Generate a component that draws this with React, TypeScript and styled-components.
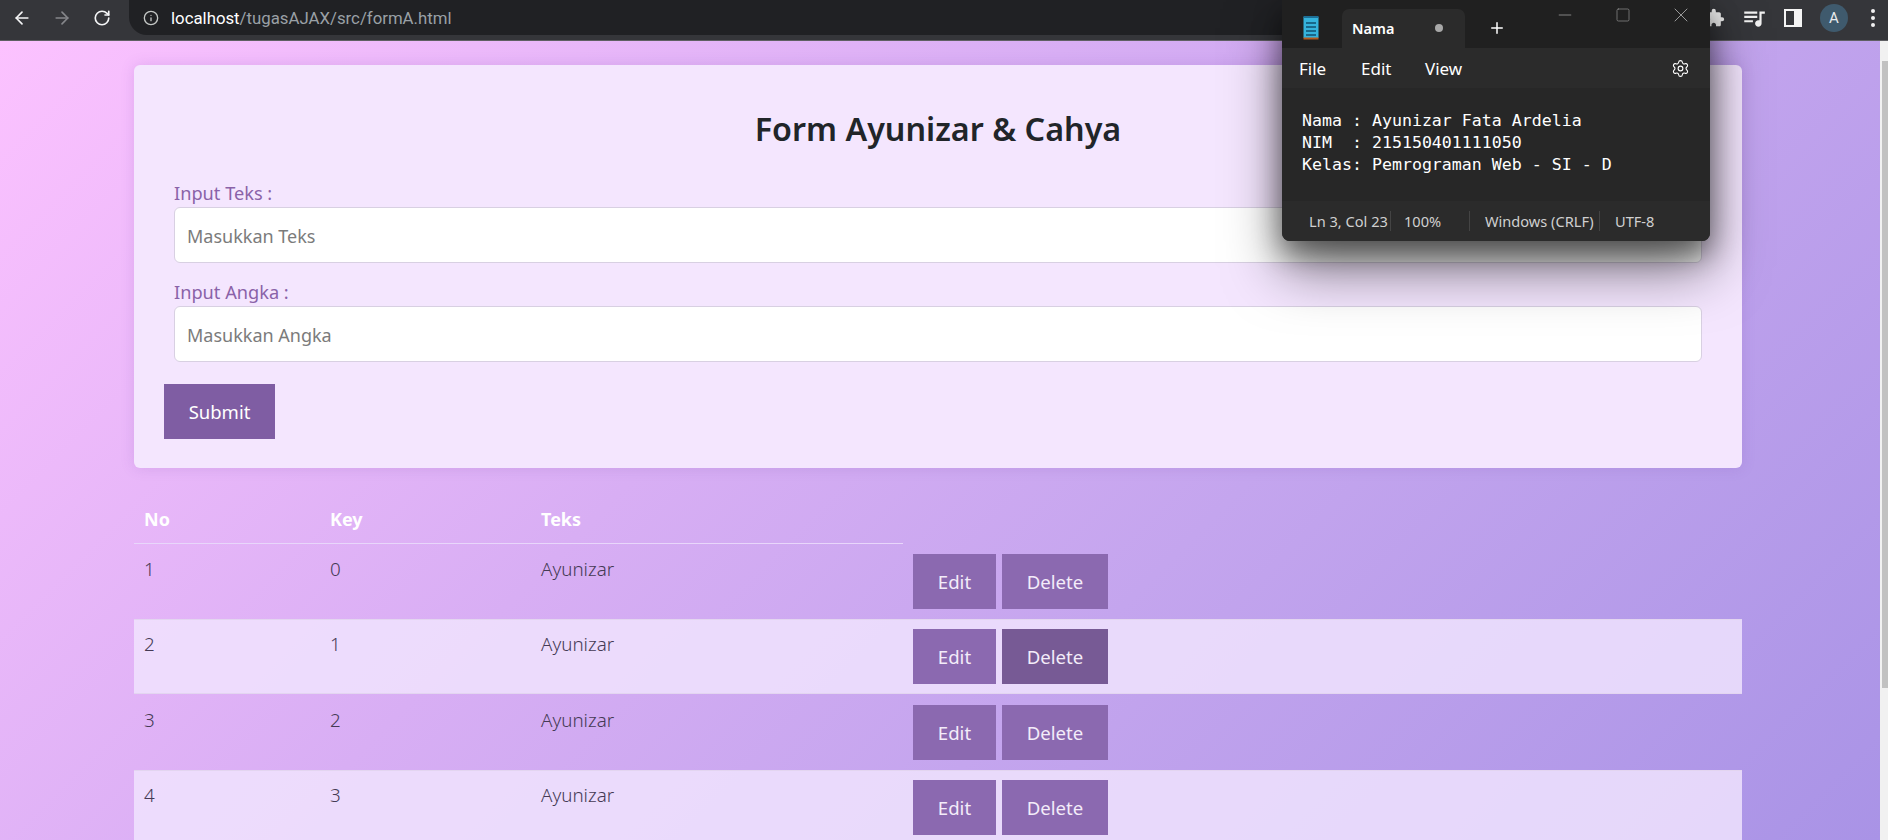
import React from "react";
import styled, { createGlobalStyle } from "styled-components";
import { ArrowLeft, ArrowRight, RotateCw, Info, Settings, Plus, Minus, Square, X } from "lucide-react";
import { MdExtension, MdQueueMusic } from "react-icons/md";

const GlobalStyle = createGlobalStyle`
  html, body {
    margin: 0;
    padding: 0;
    height: 840px;
    overflow: hidden;
    font-family: "Noto Sans", "Open Sans", sans-serif;
  }
  * {
    box-sizing: border-box;
  }
`;

const Screen = styled.div`
  position: relative;
  width: 1888px;
  height: 840px;
  overflow: hidden;
  display: flex;
  flex-direction: column;
`;

const BrowserBar = styled.div`
  height: 41px;
  flex: none;
  display: flex;
  align-items: flex-start;
  background: #35363a;
  border-bottom: 1px solid #5f5f63;
  color: #fff;
`;

const NavButton = styled.div<{ $dim?: boolean }>`
  width: 40px;
  height: 35px;
  display: flex;
  align-items: center;
  justify-content: center;
  color: ${(p) => (p.$dim ? "#85868a" : "#f4f5f6")};
`;

const NavGroup = styled.div`
  display: flex;
  margin-left: 2px;
  width: 127px;
`;

const AddressBar = styled.div`
  flex: 1;
  height: 35px;
  display: flex;
  align-items: center;
  gap: 12px;
  padding-left: 14px;
  background: #202124;
  border-radius: 0 0 18px 18px;
  font-family: Roboto, sans-serif;
  font-size: 16.8px;
  color: #9aa0a6;
  white-space: nowrap;
`;

const Host = styled.span`
  color: #fff;
`;

const BarRight = styled.div`
  width: 193px;
  flex: none;
  height: 35px;
  display: flex;
  align-items: center;
`;

const BarIcon = styled.div`
  width: 39px;
  flex: none;
  display: flex;
  justify-content: center;
  color: #f1f1f1;
`;

const Avatar = styled.div`
  width: 28px;
  height: 28px;
  margin-left: 8px;
  flex: none;
  border-radius: 50%;
  background: #3f5a6d;
  color: #e8eaed;
  font-family: Roboto, sans-serif;
  font-size: 15px;
  display: flex;
  align-items: center;
  justify-content: center;
`;

const Dots = styled.div`
  margin-left: 23px;
  display: flex;
  flex-direction: column;
  gap: 3px;
  span {
    width: 4px;
    height: 4px;
    border-radius: 50%;
    background: #f1f1f1;
  }
`;

const Viewport = styled.div`
  flex: 1;
  display: flex;
  min-height: 0;
`;

const Page = styled.main`
  flex: 1;
  padding: 24px 138px 0 134px;
  background: linear-gradient(135deg, #fcc2ff 0%, #d8aef4 40%, #c4a5ee 63%, #a993e6 100%);
  overflow: hidden;
  color: #453a54;
`;

const Scrollbar = styled.div`
  width: 8px;
  flex: none;
  background: #f1f1f1;
  padding-top: 20px;
`;

const ScrollThumb = styled.div`
  height: 627px;
  margin-left: 2px;
  background: #c1c1c1;
`;

const Card = styled.section`
  height: 403px;
  padding: 39px 30px 0;
  border-radius: 6px;
  background: #f4e6fe;
  box-shadow: 0 0 14px rgba(120, 70, 170, 0.18);
`;

const Title = styled.h1`
  margin: 0 0 29px;
  height: 48px;
  font-size: 32.3px;
  line-height: 48px;
  font-weight: 600;
  text-align: center;
  color: #212529;
`;

const Field = styled.div`
  padding: 0 10px;
  margin-bottom: 17px;
  &:nth-of-type(n + 2) {
    margin-bottom: 0;
  }
`;

const Label = styled.label`
  display: block;
  margin-bottom: 2px;
  font-size: 18.2px;
  line-height: 24px;
  color: #8a62a8;
`;

const TextInput = styled.input`
  display: block;
  width: 100%;
  height: 56px;
  padding: 1px 12px 0;
  border: 1px solid #d8d0e2;
  border-radius: 6px;
  background: #fff;
  font-family: inherit;
  font-size: 18px;
  outline: none;
  &::placeholder {
    color: #7b7b7b;
  }
`;

const SubmitButton = styled.button`
  display: block;
  width: 111px;
  height: 55px;
  margin-top: 22px;
  border: 0;
  background: #7f5da3;
  color: #fff;
  font-family: inherit;
  font-size: 18.5px;
`;

const DataTable = styled.table`
  width: 100%;
  margin-top: 27px;
  border-collapse: collapse;
  table-layout: fixed;
  font-size: 18px;
`;

const HeadCell = styled.th<{ $w?: number }>`
  width: ${(p) => (p.$w ? `${p.$w}px` : "auto")};
  height: 48px;
  padding: 0 10px;
  text-align: left;
  font-weight: 700;
  color: #fff;
  border-bottom: 1px solid #e8d6fb;
`;

const BlankHead = styled.th``;

const Row = styled.tr<{ $stripe?: boolean }>`
  height: 75.6px;
  background: ${(p) => (p.$stripe ? "rgba(240, 229, 254, 0.83)" : "transparent")};
  ${(p) => (p.$stripe ? "box-shadow: inset 0 1px 0 #e3d5f0, inset 0 -1px 0 #e3d5f0;" : "")}
`;

const Cell = styled.td`
  padding: 12.6px 10px 0;
  vertical-align: top;
  font-size: 18.8px;
  line-height: 27px;
  font-weight: 300;
`;

const ActionCell = styled.td`
  padding: 10.6px 10px 0;
  vertical-align: top;
`;

const Actions = styled.div`
  display: flex;
  gap: 6px;
`;

const RowButton = styled.button<{ $w: number; $hover?: boolean }>`
  width: ${(p) => p.$w}px;
  height: 55px;
  border: 0;
  background: ${(p) => (p.$hover ? "#775a95" : "#8b69b0")};
  color: #f3ecf9;
  font-family: inherit;
  font-size: 18.6px;
`;

const Notepad = styled.div`
  position: absolute;
  left: 1282px;
  top: 0;
  width: 428px;
  height: 241px;
  display: flex;
  flex-direction: column;
  background: #272727;
  border-radius: 0 0 8px 8px;
  box-shadow: 0 12px 28px rgba(0, 0, 0, 0.45), 0 28px 56px rgba(0, 0, 0, 0.5);
  color: #fff;
  overflow: hidden;
`;

const TabStrip = styled.div`
  height: 48px;
  flex: none;
  display: flex;
  align-items: flex-end;
  background: #202020;
  position: relative;
`;

const AppIcon = styled.div`
  width: 60px;
  height: 39px;
  padding: 7px 0 0 21px;
`;

const Tab = styled.div`
  width: 123px;
  height: 39px;
  padding: 0 22px 2px 10px;
  display: flex;
  align-items: center;
  justify-content: space-between;
  background: #2b2b2b;
  border-radius: 7px 7px 0 0;
  font-size: 14.5px;
  font-weight: 600;
`;

const UnsavedDot = styled.span`
  width: 8px;
  height: 8px;
  border-radius: 50%;
  background: #a8a8a8;
`;

const NewTab = styled.div`
  width: 64px;
  height: 39px;
  padding-bottom: 2px;
  display: flex;
  align-items: center;
  justify-content: center;
`;

const WindowControls = styled.div`
  position: absolute;
  top: 5px;
  right: 0;
  display: flex;
  color: #999;
`;

const WindowButton = styled.div`
  width: 58px;
  height: 20px;
  display: flex;
  align-items: center;
  justify-content: center;
`;

const MenuBar = styled.div`
  height: 40px;
  flex: none;
  display: flex;
  align-items: center;
  padding: 0 17px;
  background: #2b2b2b;
  font-size: 17px;
`;

const MenuItem = styled.span<{ $w: number }>`
  width: ${(p) => p.$w}px;
`;

const GearSlot = styled.div`
  margin-left: auto;
  margin-right: 3px;
  display: flex;
`;

const Editor = styled.pre`
  flex: 1;
  margin: 0;
  padding: 22px 0 0 20px;
  font-family: "DejaVu Sans Mono", "Liberation Mono", monospace;
  font-size: 16.6px;
  line-height: 22px;
  color: #fff;
`;

const StatusBar = styled.div`
  height: 40px;
  flex: none;
  padding-bottom: 0;
  display: flex;
  align-items: center;
  background: #2b2b2b;
  font-size: 14.6px;
  color: #d0d0d0;
`;

const StatusItem = styled.div<{ $w: number; $pad?: number; $sep?: boolean }>`
  width: ${(p) => p.$w}px;
  height: 20px;
  line-height: 20px;
  padding-left: ${(p) => p.$pad ?? 13}px;
  white-space: nowrap;
  flex: none;
  border-right: ${(p) => (p.$sep ? "1px solid #444" : "0")};
`;

const rows = [
  { no: 1, key: 0, hover: false },
  { no: 2, key: 1, hover: true },
  { no: 3, key: 2, hover: false },
  { no: 4, key: 3, hover: false },
];

function NotepadGlyph() {
  return (
    <svg width="16" height="24" viewBox="0 0 16 24">
      <rect x="0.5" y="1" width="15" height="21" fill="#35b3dc" />
      <rect x="0.5" y="21.5" width="15" height="2" fill="#b35a1f" />
      <rect x="0.5" y="0" width="15" height="2" fill="#1d6f96" />
      <path d="M3 7h10M3 11h10M3 15h10M3 19h10" stroke="#10506f" strokeWidth="1.6" />
    </svg>
  );
}

function SidePanelGlyph() {
  return (
    <svg width="18" height="18" viewBox="0 0 18 18">
      <rect x="1" y="1" width="16" height="16" fill="none" stroke="#f4f4f4" strokeWidth="2" />
      <rect x="10" y="1" width="7" height="16" fill="#f4f4f4" />
    </svg>
  );
}

export default function App() {
  return (
    <Screen>
      <GlobalStyle />
      <BrowserBar>
        <NavGroup>
          <NavButton><ArrowLeft size={20} strokeWidth={2} /></NavButton>
          <NavButton $dim><ArrowRight size={20} strokeWidth={2} /></NavButton>
          <NavButton><RotateCw size={18} strokeWidth={2.2} /></NavButton>
        </NavGroup>
        <AddressBar>
          <Info size={16} color="#c4c7c5" />
          <span><Host>localhost</Host>/tugasAJAX/src/formA.html</span>
        </AddressBar>
        <BarRight>
          <BarIcon><MdExtension size={20} /></BarIcon>
          <BarIcon><MdQueueMusic size={26} /></BarIcon>
          <BarIcon><SidePanelGlyph /></BarIcon>
          <Avatar>A</Avatar>
          <Dots><span /><span /><span /></Dots>
        </BarRight>
      </BrowserBar>

      <Viewport>
        <Page>
          <Card>
            <Title>Form Ayunizar &amp; Cahya</Title>
            <Field>
              <Label>Input Teks :</Label>
              <TextInput placeholder="Masukkan Teks" />
            </Field>
            <Field>
              <Label>Input Angka :</Label>
              <TextInput placeholder="Masukkan Angka" />
            </Field>
            <SubmitButton>Submit</SubmitButton>
          </Card>

          <DataTable>
            <thead>
              <tr>
                <HeadCell $w={186}>No</HeadCell>
                <HeadCell $w={211}>Key</HeadCell>
                <HeadCell $w={372}>Teks</HeadCell>
                <BlankHead />
              </tr>
            </thead>
            <tbody>
              {rows.map((r) => (
                <Row key={r.no} $stripe={r.no % 2 === 0}>
                  <Cell>{r.no}</Cell>
                  <Cell>{r.key}</Cell>
                  <Cell>Ayunizar</Cell>
                  <ActionCell>
                    <Actions>
                      <RowButton $w={83}>Edit</RowButton>
                      <RowButton $w={106} $hover={r.hover}>Delete</RowButton>
                    </Actions>
                  </ActionCell>
                </Row>
              ))}
            </tbody>
          </DataTable>
        </Page>
        <Scrollbar><ScrollThumb /></Scrollbar>
      </Viewport>

      <Notepad>
        <TabStrip>
          <AppIcon><NotepadGlyph /></AppIcon>
          <Tab>Nama<UnsavedDot /></Tab>
          <NewTab><Plus size={18} /></NewTab>
          <WindowControls>
            <WindowButton><Minus size={20} strokeWidth={1} /></WindowButton>
            <WindowButton><Square size={16} strokeWidth={1} /></WindowButton>
            <WindowButton><X size={24} strokeWidth={1} /></WindowButton>
          </WindowControls>
        </TabStrip>
        <MenuBar>
          <MenuItem $w={62}>File</MenuItem>
          <MenuItem $w={64}>Edit</MenuItem>
          <MenuItem $w={50}>View</MenuItem>
          <GearSlot><Settings size={19} strokeWidth={1.4} /></GearSlot>
        </MenuBar>
        <Editor>{"Nama : Ayunizar Fata Ardelia\nNIM  : 215150401111050\nKelas: Pemrograman Web - SI - D"}</Editor>
        <StatusBar>
          <StatusItem $w={109} $pad={27} $sep>Ln 3, Col 23</StatusItem>
          <StatusItem $w={79} $sep>100%</StatusItem>
          <StatusItem $w={130} $pad={15} $sep>Windows (CRLF)</StatusItem>
          <StatusItem $w={100} $pad={15}>UTF-8</StatusItem>
        </StatusBar>
      </Notepad>
    </Screen>
  );
}
